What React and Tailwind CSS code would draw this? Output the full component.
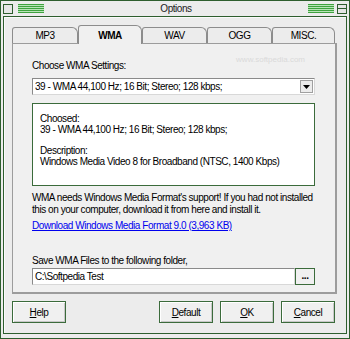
import React from 'react';

const Stripes = () => (
  <div className="flex h-[9px] w-[26px] flex-col justify-between bg-[#b8e4b8]">
    <div className="h-px bg-[#3fa33f]" />
    <div className="h-px bg-[#3fa33f]" />
    <div className="h-px bg-[#3fa33f]" />
    <div className="h-px bg-[#3fa33f]" />
    <div className="h-px bg-[#3fa33f]" />
  </div>
);

const Tab = ({ label, width, active }) => (
  <div
    className={
      active
        ? 'relative z-10 -mb-px flex h-[19px] items-center justify-center rounded-tl-[3px] rounded-tr-[6px] border border-b-0 border-[#8c8c8c] bg-[#f0f0f0] font-bold'
        : 'flex h-[16px] items-center justify-center self-end rounded-tl-[3px] rounded-tr-[6px] border border-b-0 border-[#8c8c8c] bg-[#ececec]'
    }
    style={{ width }}
  >
    {label}
  </div>
);

const Btn = ({ children }) => (
  <div className="flex h-[22px] w-[54px] items-center justify-center border border-[#3b6b3b] bg-[#f0f0f0] shadow-[inset_1px_1px_0_#ffffff,inset_-1px_-1px_0_#c8c8c8]">
    {children}
  </div>
);

export default function App() {
  return (
    <div className="flex h-[339px] w-[350px] flex-col border border-[#2e5e2e] bg-[#ececec] font-['Liberation_Sans',Arial,sans-serif] text-[10px] leading-[13px] tracking-[-0.45px] text-black">
      {/* title bar */}
      <div className="flex h-[15px] items-center px-[2px]">
        <div className="h-[10px] w-[10px] border border-[#2e5e2e] bg-[#e6e6e6]" />
        <div className="ml-[5px]">
          <Stripes />
        </div>
        <div className="flex-1 text-center text-[#222]">Options</div>
        <Stripes />
        <div className="ml-[3px] flex h-[10px] w-[10px] flex-col justify-center border border-[#2e5e2e] bg-[#e6e6e6]">
          <div className="h-px bg-[#2e5e2e]" />
        </div>
      </div>

      {/* frame */}
      <div className="relative mx-[2px] mb-[4px] flex flex-1 flex-col border border-[#2e5e2e] pl-[8px] pt-[8px] shadow-[inset_1px_1px_0_#fafafa]">
        {/* tabs */}
        <div className="flex h-[18px] items-end">
          <Tab label="MP3" width={66} />
          <Tab label="WMA" width={64} active />
          <Tab label="WAV" width={65} />
          <Tab label="OGG" width={65} />
          <Tab label="MISC." width={63} />
        </div>

        {/* panel */}
        <div className="flex h-[251px] w-[325px] flex-col border border-[#9c9c9c] border-r-2 border-b-2 bg-[#f0f0f0] pl-[19px] pt-[15px]">
          <div className="flex">
            <span className="flex-1">Choose WMA Settings:</span>
            <span className="mr-[30px] -mt-[6px] text-[8px] tracking-normal text-[#dadada]">www.softpedia.com</span>
          </div>

          <div className="mt-[6px] flex h-[17px] w-[283px] items-center border border-[#8a8a8a] border-b-[#d8d8d8] border-r-[#d8d8d8] bg-white pl-[2px]">
            <span className="flex-1">39 - WMA 44,100 Hz; 16 Bit; Stereo; 128 kbps;</span>
            <div className="mr-px flex h-[13px] w-[13px] items-center justify-center border border-[#a0a0a0] bg-[#ececec]">
              <svg width="7" height="4" viewBox="0 0 7 4">
                <path d="M0 0h7L3.5 4z" fill="#000" />
              </svg>
            </div>
          </div>

          <div className="mt-[8px] h-[83px] w-[283px] border border-[#3b6b3b] bg-white pl-[7px] pt-[9px] leading-[11px]">
            <div>Choosed:</div>
            <div>39 - WMA 44,100 Hz; 16 Bit; Stereo; 128 kbps;</div>
            <div className="mt-[10px]">Description:</div>
            <div>Windows Media Video 8 for Broadband (NTSC, 1400 Kbps)</div>
          </div>

          <div className="mt-[6px] leading-[12px]">
            WMA needs Windows Media Format's support! If you had not installed
            <br />
            this on your computer, download it from here and install it.
          </div>
          <div className="mt-[3px] text-[#0000ee] underline">Download Windows Media Format 9.0 (3,963 KB)</div>

          <div className="mt-[22px]">Save WMA Files to the following folder,</div>
          <div className="mt-px flex h-[17px] w-[283px]">
            <div className="flex flex-1 items-center border border-[#8a8a8a] border-b-[#d8d8d8] border-r-[#d8d8d8] bg-white pl-[2px]">
              C:\Softpedia Test
            </div>
            <div className="flex w-[20px] items-center justify-center border border-[#3b6b3b] bg-[#f0f0f0] pb-[3px] font-bold">
              ...
            </div>
          </div>
        </div>

        {/* buttons */}
        <div className="mt-[7px] flex w-[323px] items-center">
          <Btn>
            <span><span className="underline">H</span>elp</span>
          </Btn>
          <div className="flex-1" />
          <div className="flex gap-[7px]">
            <Btn>
              <span><span className="underline">D</span>efault</span>
            </Btn>
            <Btn>
              <span><span className="underline">O</span>K</span>
            </Btn>
            <Btn>
              <span><span className="underline">C</span>ancel</span>
            </Btn>
          </div>
        </div>
      </div>
    </div>
  );
}
